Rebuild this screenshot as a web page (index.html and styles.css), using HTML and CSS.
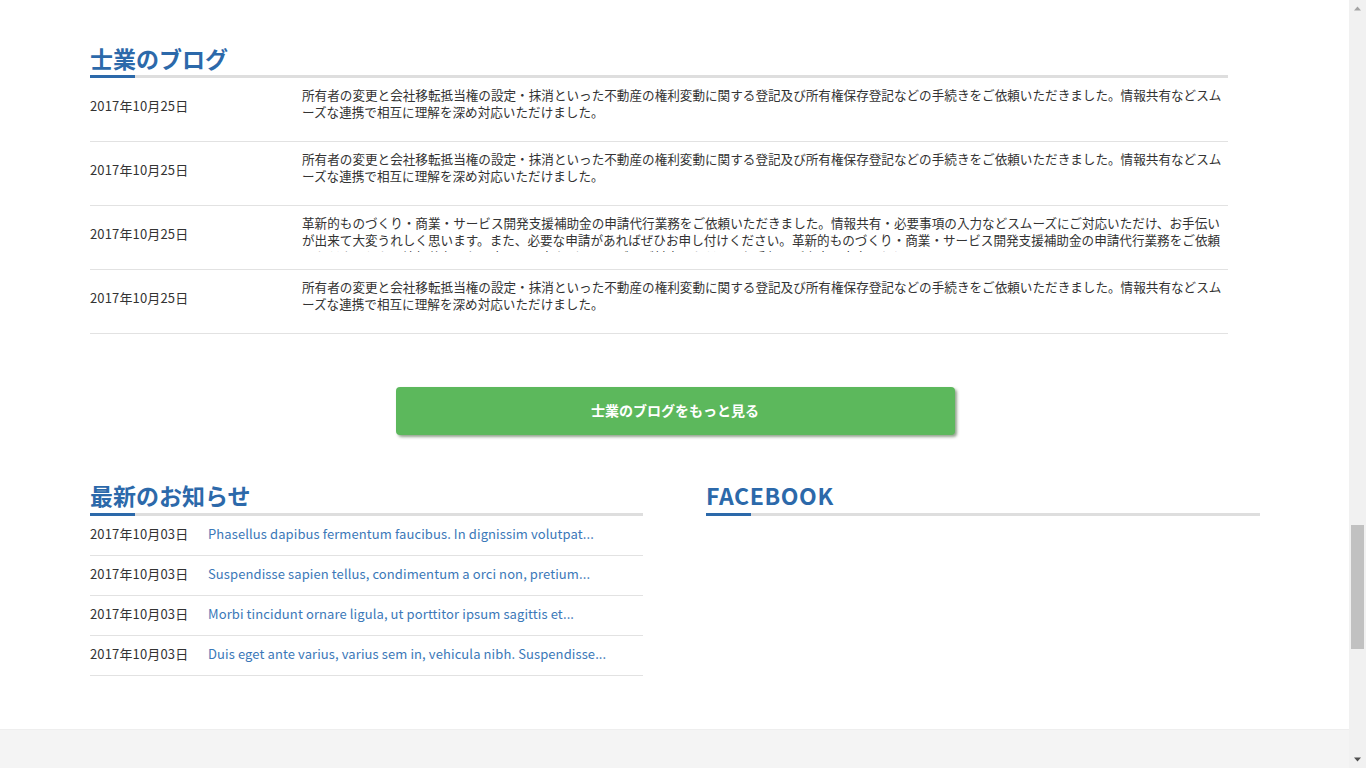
FILE: index.html
```html
<!DOCTYPE html>
<html lang="ja">
<head>
<meta charset="utf-8">
<title>士業のブログ</title>
<link rel="stylesheet" href="styles.css">
</head>
<body>
<div class="page">
  <section class="blog">
    <h2 class="sec-title">士業のブログ</h2>
    <div class="rule"></div>
    <ul class="blog-list">
      <li class="blog-row">
        <span class="blog-date">2017年10月25日</span>
        <p class="blog-text">所有者の変更と会社移転抵当権の設定・抹消といった不動産の権利変動に関する登記及び所有権保存登記などの手続きをご依頼いただきました。情報共有などスムーズな連携で相互に理解を深め対応いただけました。</p>
      </li>
      <li class="blog-row">
        <span class="blog-date">2017年10月25日</span>
        <p class="blog-text">所有者の変更と会社移転抵当権の設定・抹消といった不動産の権利変動に関する登記及び所有権保存登記などの手続きをご依頼いただきました。情報共有などスムーズな連携で相互に理解を深め対応いただけました。</p>
      </li>
      <li class="blog-row">
        <span class="blog-date">2017年10月25日</span>
        <p class="blog-text">革新的ものづくり・商業・サービス開発支援補助金の申請代行業務をご依頼いただきました。情報共有・必要事項の入力などスムーズにご対応いただけ、お手伝いが出来て大変うれしく思います。また、必要な申請があればぜひお申し付けください。革新的ものづくり・商業・サービス開発支援補助金の申請代行業務をご依頼いただきました。情報共有・必要事項の入力などスムーズにご対応いただけ、お手伝いが出来て大変うれしく思います。</p>
      </li>
      <li class="blog-row">
        <span class="blog-date">2017年10月25日</span>
        <p class="blog-text">所有者の変更と会社移転抵当権の設定・抹消といった不動産の権利変動に関する登記及び所有権保存登記などの手続きをご依頼いただきました。情報共有などスムーズな連携で相互に理解を深め対応いただけました。</p>
      </li>
    </ul>
  </section>

  <div class="more-wrap">
    <a class="more-btn" href="#">士業のブログをもっと見る</a>
  </div>

  <div class="bottom">
    <section class="news">
      <h2 class="sec-title">最新のお知らせ</h2>
      <div class="rule"></div>
      <ul class="news-list">
        <li class="news-row"><span class="news-date">2017年10月03日</span><a class="news-link" href="#">Phasellus dapibus fermentum faucibus. In dignissim volutpat...</a></li>
        <li class="news-row"><span class="news-date">2017年10月03日</span><a class="news-link" href="#">Suspendisse sapien tellus, condimentum a orci non, pretium...</a></li>
        <li class="news-row"><span class="news-date">2017年10月03日</span><a class="news-link" href="#">Morbi tincidunt ornare ligula, ut porttitor ipsum sagittis et...</a></li>
        <li class="news-row"><span class="news-date">2017年10月03日</span><a class="news-link" href="#">Duis eget ante varius, varius sem in, vehicula nibh. Suspendisse...</a></li>
      </ul>
    </section>
    <section class="fb">
      <h2 class="sec-title fb-title">FACEBOOK</h2>
      <div class="rule"></div>
    </section>
  </div>
</div>
<footer class="footer"></footer>

<div class="scrollbar" aria-hidden="true">
  <svg class="sb-arrow" width="17" height="17" viewBox="0 0 17 17"><path d="M5 10.5 L8.5 6.5 L12 10.5 Z" fill="#a3a3a3"/></svg>
  <div class="sb-track"><div class="sb-thumb"></div></div>
  <svg class="sb-arrow" width="17" height="17" viewBox="0 0 17 17"><path d="M5 6.5 L12 6.5 L8.5 10.5 Z" fill="#505050"/></svg>
</div>
</body>
</html>
```
FILE: styles.css
```css
html, body {
  margin: 0;
  padding: 0;
  background: #fff;
}
body {
  font-family: "Noto Sans CJK JP", "Noto Sans", sans-serif;
  color: #333;
}
ul {
  list-style: none;
  margin: 0;
  padding: 0;
}
p {
  margin: 0;
}
.page {
  width: 1170px;
  margin-left: 90px;
  padding-top: 43px;
}
.sec-title {
  margin: 0 0 3px;
  font-size: 23px;
  line-height: 30px;
  font-weight: bold;
  color: #2c69aa;
}
.blog .sec-title {
  margin-bottom: 2px;
}
.fb-title {
  letter-spacing: 0.6px;
}
.rule {
  height: 3px;
  background: linear-gradient(to right, #2c69aa 45px, #dedede 45px);
}
.blog {
  width: 1138px;
}
.blog-row {
  display: flex;
  align-items: center;
  padding: 8px 0 17px;
  border-bottom: 1px solid #e2e2e2;
}
.blog-date {
  width: 212px;
  flex: none;
  font-size: 13px;
  letter-spacing: 0.15px;
  line-height: 17px;
}
.blog-text {
  width: 926px;
  height: 38px;
  overflow: hidden;
  font-size: 12.6px;
  line-height: 17px;
  line-break: anywhere;
}
.more-wrap {
  display: flex;
  justify-content: center;
  padding: 53px 0 45px;
}
.more-btn {
  display: block;
  width: 559px;
  height: 48px;
  line-height: 46px;
  text-align: center;
  background: #5cb85c;
  color: #fff;
  font-size: 14px;
  font-weight: bold;
  text-decoration: none;
  border-radius: 4px;
  box-shadow: 2px 2px 3px rgba(40, 70, 30, 0.5);
}
.bottom {
  display: grid;
  grid-template-columns: 553px 554px;
  column-gap: 63px;
  padding-bottom: 53px;
}
.news-row {
  display: flex;
  align-items: center;
  padding: 7px 0 11px;
  line-height: 21px;
  font-size: 13px;
  border-bottom: 1px solid #e2e2e2;
}
.news-date {
  width: 118px;
  flex: none;
  letter-spacing: 0.15px;
}
.news-link {
  color: #3b78b8;
  text-decoration: none;
  white-space: nowrap;
  letter-spacing: 0.1px;
}
.footer {
  height: 300px;
  background: #f4f4f4;
  border-top: 1px solid #eeeeee;
}
.scrollbar {
  position: fixed;
  top: 0;
  right: 0;
  width: 17px;
  height: 100vh;
  background: #f1f1f1;
  display: flex;
  flex-direction: column;
}
.sb-arrow {
  flex: none;
  display: block;
}
.sb-track {
  flex: 1;
  padding-top: 508px;
}
.sb-thumb {
  margin: 0 2px;
  height: 124px;
  background: #c1c1c1;
}
```
